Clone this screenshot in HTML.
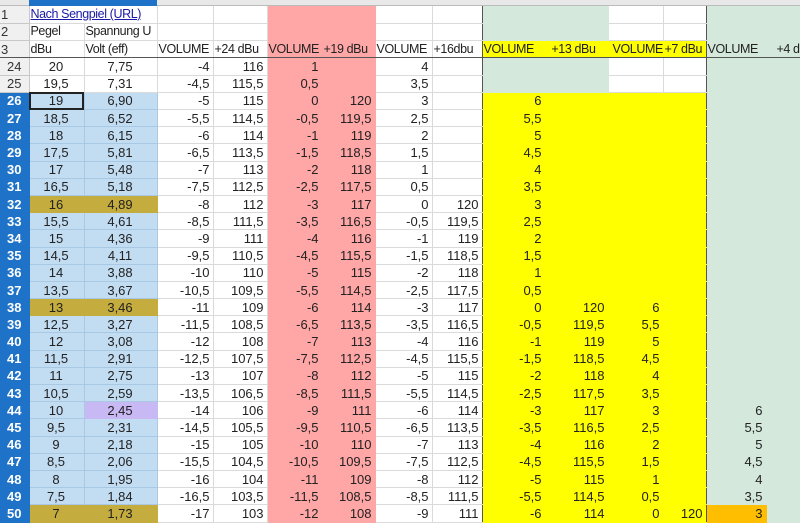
<!DOCTYPE html>
<html><head><meta charset="utf-8"><style>
body{margin:0;width:800px;height:522px;overflow:hidden;background:#fff;font-family:"Liberation Sans",Arial,sans-serif;font-size:13px;color:#222;position:relative}
#ch{position:absolute;left:0;top:0;width:800px;height:6px;background:#e8e8e8;border-bottom:1px solid #bbb;box-sizing:border-box}
#ch div{position:absolute;top:0;height:6px;background:#1e73c8}
table{position:absolute;left:0;top:6px;border-collapse:collapse;table-layout:fixed;width:829px}
td{height:17.2px;padding:0 3px 0 2px;border-right:1px solid #dadada;border-bottom:1px solid #dadada;text-align:right;white-space:nowrap;overflow:hidden;line-height:15px;box-sizing:border-box}
tr.h td{height:17.33px;text-align:left;font-size:12.5px;letter-spacing:-0.4px;padding-left:1px;padding-right:0}
tr.h td.rh{font-size:13px;letter-spacing:0}
td.rh{background:#f0f0f0;color:#333;text-align:center;padding:0;border-color:#c8c8c8;font-size:13px}
td.rs{background:#1e73c8;color:#fff;font-weight:bold;text-align:center;padding:0;border-color:#1e73c8}
td.c{text-align:center}
.b{background:#c2dcf2;border-color:#a9c8e4}
.o{background:#c5ac3e;border-color:#c5ac3e}
.l{background:#c8b8f4;border-color:#c8b8f4}
.p{background:#ffa6a6;border-color:#ffa6a6}
.y{background:#ffff00;border-color:#ffff00}
.g{background:#d4e8dc;border-color:#d4e8dc}
.or{background:#ffbf00;border-color:#ffbf00}
tr.t3 td{border-bottom:1.5px solid #555}
.vr{border-right:1.5px solid #555!important}
a{color:#1a1aa6;text-decoration:underline}
.act{outline:2px solid #222;outline-offset:-2px}
</style></head><body>
<div id="ch"><div style="left:29px;width:128px"></div></div>
<table>
<colgroup><col style="width:29px"><col style="width:55px"><col style="width:73px"><col style="width:56px"><col style="width:54px"><col style="width:55px"><col style="width:53px"><col style="width:57px"><col style="width:50px"><col style="width:63px"><col style="width:63px"><col style="width:55px"><col style="width:43px"><col style="width:60px"><col style="width:63px"></colgroup>
<tr class="h"><td class="rh">1</td><td colspan="2" style="border-right:1px solid #dadada"><a>Nach Sengpiel (URL)</a></td><td></td><td></td><td class="p"></td><td class="p"></td><td></td><td class="vr"></td><td class="g"></td><td class="g"></td><td></td><td class="vr"></td><td class="g"></td><td class="g"></td></tr>
<tr class="h"><td class="rh">2</td><td>Pegel</td><td>Spannung U</td><td></td><td></td><td class="p"></td><td class="p"></td><td></td><td class="vr"></td><td class="g"></td><td class="g"></td><td></td><td class="vr"></td><td class="g"></td><td class="g"></td></tr>
<tr class="h t3"><td class="rh">3</td><td>dBu</td><td>Volt (eff)</td><td>VOLUME</td><td>+24 dBu</td><td class="p">VOLUME</td><td class="p">+19 dBu</td><td>VOLUME</td><td class="vr">+16dbu</td><td class="y">VOLUME</td><td class="y" style="text-align:right;padding-right:12px">+13 dBu</td><td class="y" style="padding-left:4px">VOLUME</td><td class="y vr">+7 dBu</td><td class="g">VOLUME</td><td class="g" style="padding-left:10px">+4 dbu</td></tr>
<tr><td class="rh">24</td><td class="c">20</td><td class="c">7,75</td><td>-4</td><td>116</td><td class="p">1</td><td class="p"></td><td>4</td><td class="vr"></td><td class="g"></td><td class="g"></td><td></td><td class="vr"></td><td class="g"></td><td class="g"></td></tr>
<tr><td class="rh">25</td><td class="c">19,5</td><td class="c">7,31</td><td>-4,5</td><td>115,5</td><td class="p">0,5</td><td class="p"></td><td>3,5</td><td class="vr"></td><td class="g"></td><td class="g"></td><td></td><td class="vr"></td><td class="g"></td><td class="g"></td></tr>
<tr><td class="rs">26</td><td class="c b act">19</td><td class="c b">6,90</td><td>-5</td><td>115</td><td class="p">0</td><td class="p">120</td><td>3</td><td class="vr"></td><td class="y">6</td><td class="y"></td><td class="y"></td><td class="y vr"></td><td class="g"></td><td class="g"></td></tr>
<tr><td class="rs">27</td><td class="c b">18,5</td><td class="c b">6,52</td><td>-5,5</td><td>114,5</td><td class="p">-0,5</td><td class="p">119,5</td><td>2,5</td><td class="vr"></td><td class="y">5,5</td><td class="y"></td><td class="y"></td><td class="y vr"></td><td class="g"></td><td class="g"></td></tr>
<tr><td class="rs">28</td><td class="c b">18</td><td class="c b">6,15</td><td>-6</td><td>114</td><td class="p">-1</td><td class="p">119</td><td>2</td><td class="vr"></td><td class="y">5</td><td class="y"></td><td class="y"></td><td class="y vr"></td><td class="g"></td><td class="g"></td></tr>
<tr><td class="rs">29</td><td class="c b">17,5</td><td class="c b">5,81</td><td>-6,5</td><td>113,5</td><td class="p">-1,5</td><td class="p">118,5</td><td>1,5</td><td class="vr"></td><td class="y">4,5</td><td class="y"></td><td class="y"></td><td class="y vr"></td><td class="g"></td><td class="g"></td></tr>
<tr><td class="rs">30</td><td class="c b">17</td><td class="c b">5,48</td><td>-7</td><td>113</td><td class="p">-2</td><td class="p">118</td><td>1</td><td class="vr"></td><td class="y">4</td><td class="y"></td><td class="y"></td><td class="y vr"></td><td class="g"></td><td class="g"></td></tr>
<tr><td class="rs">31</td><td class="c b">16,5</td><td class="c b">5,18</td><td>-7,5</td><td>112,5</td><td class="p">-2,5</td><td class="p">117,5</td><td>0,5</td><td class="vr"></td><td class="y">3,5</td><td class="y"></td><td class="y"></td><td class="y vr"></td><td class="g"></td><td class="g"></td></tr>
<tr><td class="rs">32</td><td class="c o">16</td><td class="c o">4,89</td><td>-8</td><td>112</td><td class="p">-3</td><td class="p">117</td><td>0</td><td class="vr">120</td><td class="y">3</td><td class="y"></td><td class="y"></td><td class="y vr"></td><td class="g"></td><td class="g"></td></tr>
<tr><td class="rs">33</td><td class="c b">15,5</td><td class="c b">4,61</td><td>-8,5</td><td>111,5</td><td class="p">-3,5</td><td class="p">116,5</td><td>-0,5</td><td class="vr">119,5</td><td class="y">2,5</td><td class="y"></td><td class="y"></td><td class="y vr"></td><td class="g"></td><td class="g"></td></tr>
<tr><td class="rs">34</td><td class="c b">15</td><td class="c b">4,36</td><td>-9</td><td>111</td><td class="p">-4</td><td class="p">116</td><td>-1</td><td class="vr">119</td><td class="y">2</td><td class="y"></td><td class="y"></td><td class="y vr"></td><td class="g"></td><td class="g"></td></tr>
<tr><td class="rs">35</td><td class="c b">14,5</td><td class="c b">4,11</td><td>-9,5</td><td>110,5</td><td class="p">-4,5</td><td class="p">115,5</td><td>-1,5</td><td class="vr">118,5</td><td class="y">1,5</td><td class="y"></td><td class="y"></td><td class="y vr"></td><td class="g"></td><td class="g"></td></tr>
<tr><td class="rs">36</td><td class="c b">14</td><td class="c b">3,88</td><td>-10</td><td>110</td><td class="p">-5</td><td class="p">115</td><td>-2</td><td class="vr">118</td><td class="y">1</td><td class="y"></td><td class="y"></td><td class="y vr"></td><td class="g"></td><td class="g"></td></tr>
<tr><td class="rs">37</td><td class="c b">13,5</td><td class="c b">3,67</td><td>-10,5</td><td>109,5</td><td class="p">-5,5</td><td class="p">114,5</td><td>-2,5</td><td class="vr">117,5</td><td class="y">0,5</td><td class="y"></td><td class="y"></td><td class="y vr"></td><td class="g"></td><td class="g"></td></tr>
<tr><td class="rs">38</td><td class="c o">13</td><td class="c o">3,46</td><td>-11</td><td>109</td><td class="p">-6</td><td class="p">114</td><td>-3</td><td class="vr">117</td><td class="y">0</td><td class="y">120</td><td class="y">6</td><td class="y vr"></td><td class="g"></td><td class="g"></td></tr>
<tr><td class="rs">39</td><td class="c b">12,5</td><td class="c b">3,27</td><td>-11,5</td><td>108,5</td><td class="p">-6,5</td><td class="p">113,5</td><td>-3,5</td><td class="vr">116,5</td><td class="y">-0,5</td><td class="y">119,5</td><td class="y">5,5</td><td class="y vr"></td><td class="g"></td><td class="g"></td></tr>
<tr><td class="rs">40</td><td class="c b">12</td><td class="c b">3,08</td><td>-12</td><td>108</td><td class="p">-7</td><td class="p">113</td><td>-4</td><td class="vr">116</td><td class="y">-1</td><td class="y">119</td><td class="y">5</td><td class="y vr"></td><td class="g"></td><td class="g"></td></tr>
<tr><td class="rs">41</td><td class="c b">11,5</td><td class="c b">2,91</td><td>-12,5</td><td>107,5</td><td class="p">-7,5</td><td class="p">112,5</td><td>-4,5</td><td class="vr">115,5</td><td class="y">-1,5</td><td class="y">118,5</td><td class="y">4,5</td><td class="y vr"></td><td class="g"></td><td class="g"></td></tr>
<tr><td class="rs">42</td><td class="c b">11</td><td class="c b">2,75</td><td>-13</td><td>107</td><td class="p">-8</td><td class="p">112</td><td>-5</td><td class="vr">115</td><td class="y">-2</td><td class="y">118</td><td class="y">4</td><td class="y vr"></td><td class="g"></td><td class="g"></td></tr>
<tr><td class="rs">43</td><td class="c b">10,5</td><td class="c b">2,59</td><td>-13,5</td><td>106,5</td><td class="p">-8,5</td><td class="p">111,5</td><td>-5,5</td><td class="vr">114,5</td><td class="y">-2,5</td><td class="y">117,5</td><td class="y">3,5</td><td class="y vr"></td><td class="g"></td><td class="g"></td></tr>
<tr><td class="rs">44</td><td class="c b">10</td><td class="c l">2,45</td><td>-14</td><td>106</td><td class="p">-9</td><td class="p">111</td><td>-6</td><td class="vr">114</td><td class="y">-3</td><td class="y">117</td><td class="y">3</td><td class="y vr"></td><td class="g">6</td><td class="g"></td></tr>
<tr><td class="rs">45</td><td class="c b">9,5</td><td class="c b">2,31</td><td>-14,5</td><td>105,5</td><td class="p">-9,5</td><td class="p">110,5</td><td>-6,5</td><td class="vr">113,5</td><td class="y">-3,5</td><td class="y">116,5</td><td class="y">2,5</td><td class="y vr"></td><td class="g">5,5</td><td class="g"></td></tr>
<tr><td class="rs">46</td><td class="c b">9</td><td class="c b">2,18</td><td>-15</td><td>105</td><td class="p">-10</td><td class="p">110</td><td>-7</td><td class="vr">113</td><td class="y">-4</td><td class="y">116</td><td class="y">2</td><td class="y vr"></td><td class="g">5</td><td class="g"></td></tr>
<tr><td class="rs">47</td><td class="c b">8,5</td><td class="c b">2,06</td><td>-15,5</td><td>104,5</td><td class="p">-10,5</td><td class="p">109,5</td><td>-7,5</td><td class="vr">112,5</td><td class="y">-4,5</td><td class="y">115,5</td><td class="y">1,5</td><td class="y vr"></td><td class="g">4,5</td><td class="g"></td></tr>
<tr><td class="rs">48</td><td class="c b">8</td><td class="c b">1,95</td><td>-16</td><td>104</td><td class="p">-11</td><td class="p">109</td><td>-8</td><td class="vr">112</td><td class="y">-5</td><td class="y">115</td><td class="y">1</td><td class="y vr"></td><td class="g">4</td><td class="g"></td></tr>
<tr><td class="rs">49</td><td class="c b">7,5</td><td class="c b">1,84</td><td>-16,5</td><td>103,5</td><td class="p">-11,5</td><td class="p">108,5</td><td>-8,5</td><td class="vr">111,5</td><td class="y">-5,5</td><td class="y">114,5</td><td class="y">0,5</td><td class="y vr"></td><td class="g">3,5</td><td class="g"></td></tr>
<tr><td class="rs">50</td><td class="c o">7</td><td class="c o">1,73</td><td>-17</td><td>103</td><td class="p">-12</td><td class="p">108</td><td>-9</td><td class="vr">111</td><td class="y">-6</td><td class="y">114</td><td class="y">0</td><td class="y vr">120</td><td class="or">3</td><td class="g"></td></tr>
</table>
</body></html>
